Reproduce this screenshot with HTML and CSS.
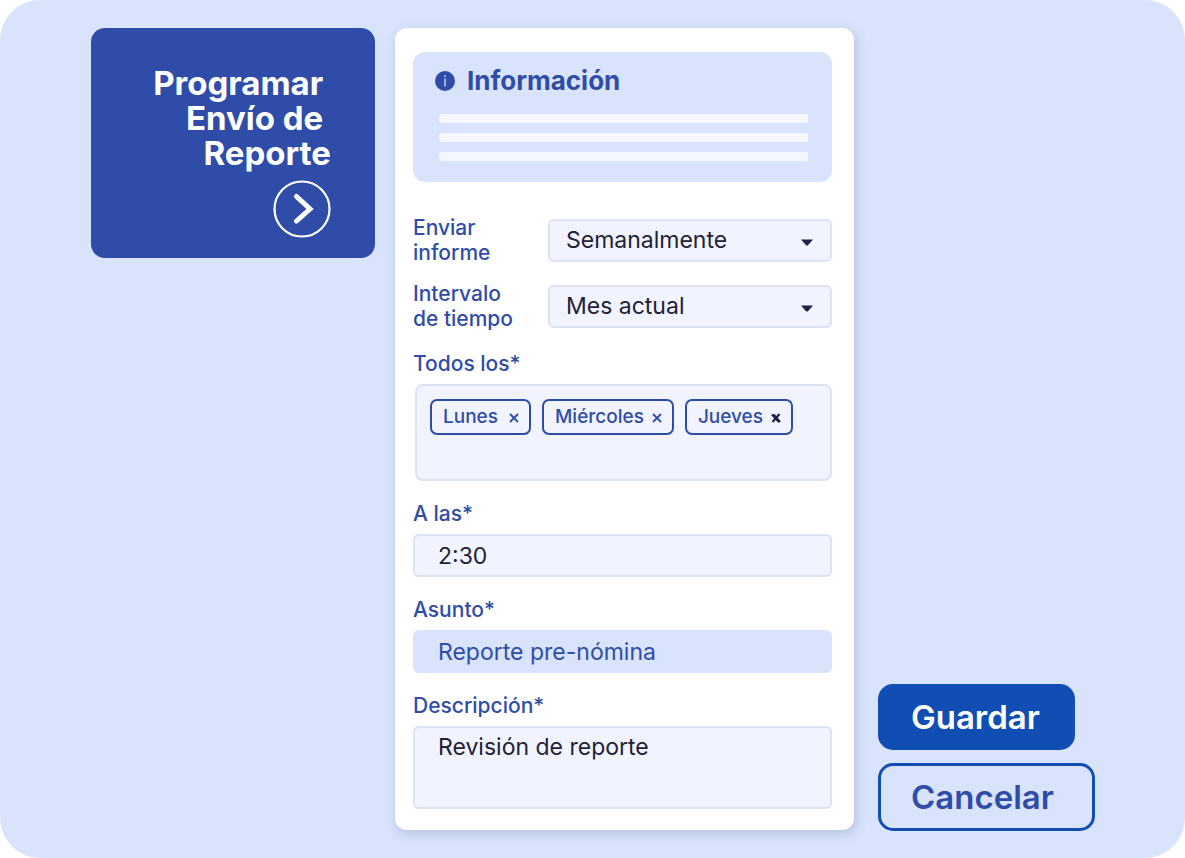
FILE: index.html
```html
<!DOCTYPE html>
<html lang="es">
<head>
<meta charset="utf-8">
<meta name="viewport" content="width=device-width, initial-scale=1">
<title>Programar Envío de Reporte</title>
<link rel="stylesheet" href="styles.css">
</head>
<body>
<main class="stage">
  <section class="intro">
    <h1 class="intro-title">Programar&nbsp;<br>Envío de&nbsp;<br>Reporte</h1>
    <button class="intro-next" type="button" aria-label="Siguiente">
      <svg viewBox="0 0 58 58" width="58" height="58" fill="none" stroke="#fff" aria-hidden="true">
        <circle cx="29" cy="29" r="27.5" stroke-width="2.200"/>
        <path d="M23.500 16.500L37 29L23.500 41" stroke-width="5" stroke-linecap="round" stroke-linejoin="miter"/>
      </svg>
    </button>
  </section>

  <form class="card" id="report-form">
    <section class="info">
      <h2 class="info-title">
        <svg class="info-icon" viewBox="0 0 20 20" width="20" height="20" aria-hidden="true">
          <circle cx="10" cy="10" r="10" fill="#2f4da8"/>
          <path d="M10 7.500V15.500" stroke="#d9e3fb" stroke-width="1.300"/>
          <circle cx="10" cy="5.200" r="0.900" fill="#d9e3fb"/>
        </svg>
        Información
      </h2>
      <div class="info-lines"><span></span><span></span><span></span></div>
    </section>

    <div class="row">
      <label class="label" for="frequency">Enviar<br>informe</label>
      <div class="select-wrap">
        <select class="control select" id="frequency"><option>Semanalmente</option></select>
        <svg class="caret" viewBox="0 0 12 7" width="12" height="7" aria-hidden="true"><path d="M0 0.500H12L7.200 6Q6 7.200 4.800 6Z" fill="#1f2148"/></svg>
      </div>
    </div>
    <div class="row">
      <label class="label" for="interval">Intervalo<br>de tiempo</label>
      <div class="select-wrap">
        <select class="control select" id="interval"><option>Mes actual</option></select>
        <svg class="caret" viewBox="0 0 12 7" width="12" height="7" aria-hidden="true"><path d="M0 0.500H12L7.200 6Q6 7.200 4.800 6Z" fill="#1f2148"/></svg>
      </div>
    </div>

    <div class="field" role="group" aria-labelledby="days-label">
      <span class="label" id="days-label">Todos los*</span>
      <div class="tags">
        <span class="tag tag-wide">Lunes
          <button class="tag-remove" type="button" aria-label="Quitar Lunes"><svg viewBox="0 0 10 10" width="10" height="10"><path d="M1 1L9 9M9 1L1 9" stroke="currentColor" stroke-width="1.800"/></svg></button>
        </span>
        <span class="tag">Miércoles
          <button class="tag-remove" type="button" aria-label="Quitar Miércoles"><svg viewBox="0 0 10 10" width="10" height="10"><path d="M1 1L9 9M9 1L1 9" stroke="currentColor" stroke-width="1.800"/></svg></button>
        </span>
        <span class="tag">Jueves
          <button class="tag-remove tag-remove-active" type="button" aria-label="Quitar Jueves"><svg viewBox="0 0 10 10" width="10" height="10"><path d="M1 1.500L8 9M8.500 1L1.500 9M2.500 1.500L9 9" stroke="currentColor" stroke-width="2.200"/></svg></button>
        </span>
      </div>
    </div>

    <div class="field">
      <label class="label" for="time">A las*</label>
      <input class="control" id="time" type="text" value="2:30">
    </div>
    <div class="field">
      <label class="label" for="subject">Asunto*</label>
      <input class="control control-filled" id="subject" type="text" value="Reporte pre-nómina">
    </div>
    <div class="field">
      <label class="label" for="description">Descripción*</label>
      <textarea class="control textarea" id="description" rows="2">Revisión de reporte</textarea>
    </div>
  </form>

  <div class="actions">
    <button class="btn btn-primary" type="submit" form="report-form">Guardar</button>
    <button class="btn btn-outline" type="button">Cancelar</button>
  </div>
</main>
</body>
</html>
```
FILE: styles.css
```css
* {
  box-sizing: border-box;
}

body {
  margin: 0;
  background: #fff;
  color: #1f2138;
  font-family: Inter, "Liberation Sans", sans-serif;
}

.stage {
  display: grid;
  grid-template-columns: 284fr 459fr 221fr;
  column-gap: 20px;
  align-items: start;
  min-height: 100vh;
  padding: 28px 90px 27px 91px;
  border-radius: 40px;
  background: #d9e3fb;
}

.intro {
  display: flex;
  flex-direction: column;
  align-items: flex-end;
  gap: 9px;
  padding: 38px 44px 20px;
  border-radius: 14px;
  background: #2f4da8;
}

.intro-title {
  margin: 0;
  color: #fff;
  font-size: 33px;
  font-weight: 700;
  line-height: 35px;
  text-align: right;
  white-space: nowrap;
}

.intro-next {
  display: block;
  padding: 0;
  border: 0;
  background: none;
}

.intro-next svg {
  display: block;
}

.card {
  display: flex;
  flex-direction: column;
  gap: 20px;
  padding: 24px 22px 21px 18px;
  border-radius: 12px;
  background: #fff;
  box-shadow: 2px 4px 12px rgba(90, 120, 160, 0.3);
}

.info {
  margin-bottom: 13px;
  padding: 13px 24px 21px 22px;
  border-radius: 12px;
  background: #d9e3fb;
}

.info-title {
  display: flex;
  align-items: center;
  gap: 12px;
  margin: 0 0 17px;
  color: #2f4da8;
  font-size: 26px;
  font-weight: 700;
  line-height: 32px;
}

.info-lines {
  display: grid;
  gap: 10px;
  padding-left: 4px;
}

.info-lines span {
  height: 9px;
  border-radius: 3px 0 0 3px;
  background: #f5f7ff;
}

.row {
  display: grid;
  grid-template-columns: 135fr 284fr;
  align-items: center;
}

.row + .row {
  margin-top: -4px;
}

.field {
  display: flex;
  flex-direction: column;
  gap: 8px;
}

.label {
  color: #2f4da8;
  font-size: 21px;
  font-weight: 500;
  line-height: 25px;
}

.control {
  display: block;
  width: 100%;
  height: 43px;
  margin: 0;
  padding: 0 23px;
  border: 2px solid #dce2f4;
  border-radius: 6px;
  background: #f1f4fe;
  color: #1f2138;
  font-family: inherit;
  font-size: 23px;
  line-height: 28px;
}

.control-filled {
  border-color: #d9e3fb;
  background: #d9e3fb;
  color: #2f4da8;
}

.select-wrap {
  position: relative;
}

.select {
  padding: 0 40px 0 16px;
  appearance: none;
}

.caret {
  position: absolute;
  top: 20px;
  right: 19px;
  pointer-events: none;
}

.textarea {
  height: 83px;
  padding: 5px 23px;
  resize: none;
}

.tags {
  display: flex;
  flex-wrap: wrap;
  align-content: flex-start;
  gap: 11px;
  min-height: 97px;
  margin-left: 2px;
  padding: 13px;
  border: 2px solid #dce2f4;
  border-radius: 8px;
  background: #f1f4fe;
}

.tag {
  display: flex;
  align-items: center;
  gap: 8px;
  height: 36px;
  padding: 0 10px 0 11px;
  border: 2px solid #2f4da8;
  border-radius: 7px;
  color: #2f4da8;
  font-size: 19px;
  font-weight: 500;
  line-height: 24px;
}

.tag-wide {
  gap: 11px;
}

.tag-remove {
  padding: 2px 0 0;
  border: 0;
  background: none;
  color: #2f4da8;
}

.tag-remove svg {
  display: block;
}

.tag-remove-active {
  color: #1a2148;
}

.actions {
  display: flex;
  flex-direction: column;
  align-items: flex-start;
  align-self: end;
  gap: 13px;
  padding-left: 4px;
}

.btn {
  height: 68px;
  padding: 0 32px 0 30px;
  border: 3px solid #114eb4;
  border-radius: 15px;
  font-family: inherit;
  font-size: 33px;
  font-weight: 600;
}

.btn-primary {
  height: 66px;
  background: #114eb4;
  color: #fff;
}

.btn-outline {
  padding-right: 38px;
  background: transparent;
  color: #2f4da8;
}
```
